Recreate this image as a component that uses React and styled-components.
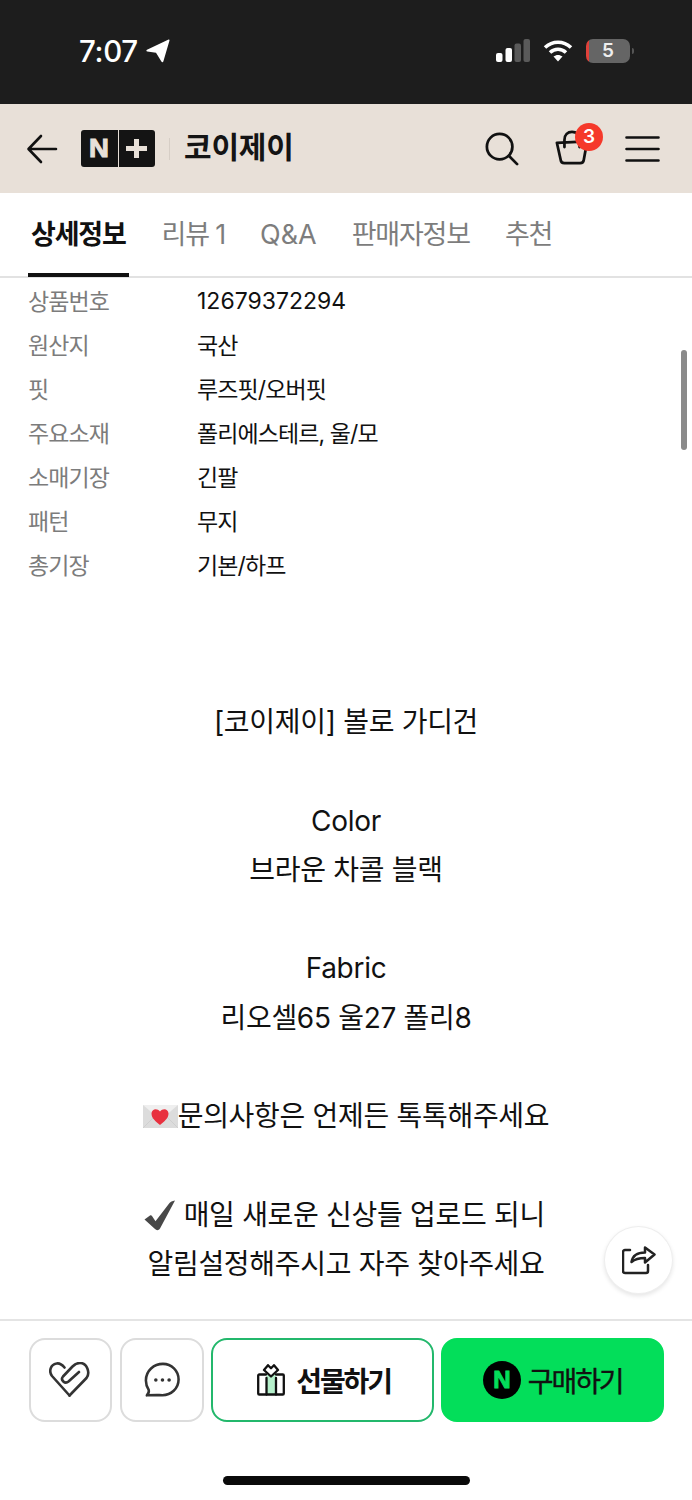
import React from "react";
import styled, { createGlobalStyle } from "styled-components";

const GlobalStyle = createGlobalStyle`
  html, body {
    margin: 0;
    padding: 0;
    background: #fff;
  }
  body {
    font-family: "Inter", "Noto Sans CJK KR", sans-serif;
    color: #111;
  }
  * {
    box-sizing: border-box;
  }
`;

const Page = styled.div`
  position: relative;
  width: 692px;
  height: 1500px;
  overflow: hidden;
  display: flex;
  flex-direction: column;
`;

const StatusBar = styled.div`
  height: 104px;
  background: #1d1d1d;
  display: flex;
  align-items: flex-start;
  justify-content: space-between;
  padding: 36px 62px 0 79px;
`;

const Clock = styled.div`
  display: flex;
  align-items: center;
  gap: 8px;
  color: #fff;
  font-size: 29.5px;
  line-height: 30px;
  font-weight: 500;
  letter-spacing: -0.3px;
`;

const StatusIcons = styled.div`
  display: flex;
  align-items: center;
  gap: 13px;
  height: 30px;
`;

const Battery = styled.div`
  position: relative;
  width: 44px;
  height: 24px;
  border-radius: 7px;
  background: linear-gradient(90deg, #e0413a 0 3px, #656565 3px);
  color: #eee;
  font-size: 19px;
  font-weight: 600;
  line-height: 24px;
  text-align: center;

  &::after {
    content: "";
    position: absolute;
    right: -4px;
    top: 9px;
    width: 2px;
    height: 6px;
    border-radius: 0 2px 2px 0;
    background: #555;
  }
`;

const Header = styled.header`
  height: 89px;
  background: #e8e0d8;
  display: flex;
  align-items: center;
  padding: 0 32px 0 26px;
`;

const BrandBadge = styled.div`
  display: flex;
  width: 74px;
  height: 37px;
  margin-left: 23px;
  border-radius: 3px;
  background: #141414;
  color: #e8e0d8;
`;

const BadgeCell = styled.div`
  flex: 1;
  display: flex;
  align-items: center;
  justify-content: center;
  font-family: "Liberation Sans", sans-serif;
  font-size: 25px;
  font-weight: 700;
  line-height: 1;
  -webkit-text-stroke: 1px #e8e0d8;

  & + & {
    border-left: 1px solid #e8e0d8;
  }
`;

const BadgeLetter = styled.span`
  display: block;
  transform: scaleX(1.1);
`;

const HeaderDivider = styled.div`
  width: 1px;
  height: 22px;
  margin: 0 14px;
  background: #d6cec6;
`;

const StoreName = styled.h1`
  flex: 1;
  margin: 0 0 3px;
  font-size: 30px;
  line-height: 40px;
  font-weight: 700;
  letter-spacing: -0.2px;
  color: #141414;
`;

const HeaderActions = styled.div`
  display: flex;
  align-items: center;
  gap: 36px;
`;

const CartButton = styled.div`
  position: relative;
  width: 34px;
  height: 38px;
`;

const CartCount = styled.span`
  position: absolute;
  top: -7px;
  right: -14px;
  width: 28px;
  height: 28px;
  border-radius: 50%;
  background: #f5392b;
  color: #fff;
  font-size: 19px;
  font-weight: 600;
  line-height: 28px;
  text-align: center;
`;

const TabBar = styled.nav`
  height: 85px;
  display: flex;
  padding-left: 28px;
  gap: 35px;
  border-bottom: 2px solid #e2e2e2;
`;

const Tab = styled.div`
  height: 84px;
  padding: 0 ${(p) => (p.$active ? "3px" : "0")};
  margin-right: ${(p) => (p.$active ? "-2px" : "0")};
  font-size: 27px;
  line-height: 84px;
  letter-spacing: ${(p) => (p.$latin ? "0" : "-1.2px")};
  font-weight: ${(p) => (p.$active ? 700 : 400)};
  color: ${(p) => (p.$active ? "#111" : "#7d7d7d")};
  border-bottom: ${(p) => (p.$active ? "4px solid #111" : "none")};
`;

const Content = styled.main`
  position: relative;
  height: 1041px;
  overflow: hidden;
`;

const SpecTable = styled.dl`
  margin: 0;
  padding: 0 28px;
`;

const SpecRow = styled.div`
  display: grid;
  grid-template-columns: 169px 1fr;
  height: 44px;
  align-items: center;
`;

const SpecLabel = styled.dt`
  font-size: 23px;
  letter-spacing: -0.9px;
  color: #7c7c7c;
`;

const SpecValue = styled.dd`
  margin: 0;
  padding-top: ${(p) => (p.$numeric ? "2px" : "0")};
  font-size: 23px;
  letter-spacing: ${(p) => (p.$numeric ? "0" : "-0.9px")};
  color: #111;
`;

const Description = styled.section`
  margin-top: 112px;
  text-align: center;
  font-size: 28px;
  line-height: 49.3px;
  color: #111;
`;

const DescLine = styled.div`
  display: flex;
  align-items: center;
  justify-content: center;
  height: 49.3px;
  padding-right: ${(p) => (p.$nudge ? "3px" : "0")};
  letter-spacing: -0.3px;
`;

const Scrollbar = styled.div`
  position: absolute;
  top: 72px;
  right: 5px;
  width: 6px;
  height: 100px;
  border-radius: 3px;
  background: #8a8a8a;
`;

const ShareButton = styled.div`
  position: absolute;
  right: 19px;
  top: 948px;
  width: 69px;
  height: 68px;
  border-radius: 50%;
  background: #fff;
  border: 1px solid #eee;
  box-shadow: 0 2px 4px rgba(0, 0, 0, 0.1);
  display: flex;
  align-items: center;
  justify-content: center;
`;

const ActionBar = styled.footer`
  height: 181px;
  border-top: 2px solid #e4e4e4;
  display: flex;
  flex-direction: column;
  align-items: center;
`;

const ActionRow = styled.div`
  width: 100%;
  display: flex;
  gap: 7.5px;
  padding: 17px 28px 0 28.5px;
`;

const IconButton = styled.button`
  width: 84px;
  height: 84px;
  padding: 0;
  border: 2px solid #dcdcdc;
  border-radius: 16px;
  background: #fff;
  display: flex;
  align-items: center;
  justify-content: center;
`;

const CtaButton = styled.button`
  width: 223px;
  height: 84px;
  padding: 0 0 0 ${(p) => (p.$filled ? "0" : "3px")};
  border: 2px solid ${(p) => (p.$filled ? "#03de5a" : "#23b86c")};
  border-radius: 16px;
  background: ${(p) => (p.$filled ? "#03de5a" : "#fff")};
  color: #111;
  font-family: inherit;
  font-size: 28px;
  font-weight: ${(p) => (p.$filled ? 400 : 700)};
  letter-spacing: -2.1px;
  -webkit-text-stroke: ${(p) => (p.$filled ? "0.4px #111" : "0")};
  display: flex;
  align-items: center;
  justify-content: center;
  gap: ${(p) => (p.$filled ? "7px" : "11px")};
`;

const NaverMark = styled.span`
  width: 38px;
  height: 38px;
  border-radius: 50%;
  background: #000;
  color: #03de5a;
  font-family: "Liberation Sans", sans-serif;
  font-size: 24px;
  font-weight: 700;
  line-height: 38px;
  text-align: center;
  letter-spacing: 0;
  -webkit-text-stroke: 1px #03de5a;
`;

const HomeIndicator = styled.div`
  width: 247px;
  height: 9px;
  margin-top: 54px;
  border-radius: 5px;
  background: #0a0a0a;
`;

const specs = [
  ["상품번호", "12679372294"],
  ["원산지", "국산"],
  ["핏", "루즈핏/오버핏"],
  ["주요소재", "폴리에스테르, 울/모"],
  ["소매기장", "긴팔"],
  ["패턴", "무지"],
  ["총기장", "기본/하프"],
];

const tabs = ["상세정보", "리뷰 1", "Q&A", "판매자정보", "추천"];

const LocationIcon = () => (
  <svg width="24" height="24" viewBox="0 0 24 24">
    <path d="M22.6.6 1 10.7c-1 .5-.8 1.7.3 1.9l8.7 1.1 5.4 8.9c.6.9 1.8.7 2-.4L23.5 1.5c.1-.7-.3-1.100-.9-.9Z" fill="#fff" />
  </svg>
);

const SignalIcon = () => (
  <svg width="34" height="24" viewBox="0 0 34 24">
    <rect x="0" y="14" width="6.5" height="9" rx="2" fill="#fff" />
    <rect x="9.5" y="9" width="6.5" height="14" rx="2" fill="#fff" />
    <rect x="18.5" y="4.5" width="6.5" height="18.5" rx="2" fill="#5a5a5a" />
    <rect x="27.5" y="0" width="6.5" height="23" rx="2" fill="#5a5a5a" />
  </svg>
);

const WifiIcon = () => (
  <svg width="30" height="24" viewBox="0 0 30 24" fill="none" stroke="#fff" strokeWidth="3.6">
    <path d="M2 8.5C9.5 1.500 20.5 1.500 28 8.5" />
    <path d="M7 13.5c4.700-4.300 11.300-4.300 16 0" />
    <path d="M15 22.5l-4.500-5c2.700-2.100 6.300-2.100 9 0Z" fill="#fff" stroke="none" />
  </svg>
);

const BackIcon = () => (
  <svg width="32" height="32" viewBox="0 0 32 32" fill="none" stroke="#111" strokeWidth="2.6" strokeLinecap="round" strokeLinejoin="round">
    <path d="M30 16H3M15 3 2.5 16 15 29" />
  </svg>
);

const SearchIcon = () => (
  <svg width="34" height="34" viewBox="0 0 36 36" fill="none" stroke="#111" strokeWidth="2.9" strokeLinecap="round">
    <circle cx="15.5" cy="15.5" r="13.5" />
    <path d="M25.5 25.5 34 34" />
  </svg>
);

const CartIcon = () => (
  <svg width="34" height="36" viewBox="0 0 36 38" fill="none" stroke="#111" strokeWidth="2.9" strokeLinecap="round" strokeLinejoin="round">
    <path d="M2 13.5 34 12l-3.500 19.500a4 4 0 0 1-4 3.500H10a4 4 0 0 1-4-3.500Z" />
    <path d="M10 18V10.5C10 5 13.5 2 18 2s8 3 8 8.500V18" />
  </svg>
);

const MenuIcon = () => (
  <svg width="35" height="28" viewBox="0 0 35 28" fill="none" stroke="#111" strokeWidth="2.6" strokeLinecap="round">
    <path d="M1.5 2.5h32M1.500 14h32M1.500 25.500h32" />
  </svg>
);

const EnvelopeIcon = () => (
  <svg width="35" height="24" viewBox="0 0 35 24">
    <rect width="35" height="23" fill="#dcdcdc" />
    <path d="M0 0 17.5 15 35 0Z" fill="#efefef" />
    <path d="M0 23 13 10M35 23 22 10" stroke="#cfcfcf" strokeWidth="1" />
    <path d="M17 20C13 16.500 8.500 13.500 8.500 8.500 8.500 4 14 2.500 17 6.500c3-4 8.500-2.500 8.500 2 0 5-4.500 8-8.500 11.500Z" fill="#e8313f" />
  </svg>
);

const CheckIcon = () => (
  <svg width="32" height="32" viewBox="0 0 32 32">
    <path d="M.5 19.5 6 15.500c.8-.5 1.500-.3 2 .4l3.500 5.400L25.500 3c1-1.300 2.500-2 5.500-2.500L16 28.500c-1.200 2-3.500 2.300-5 .6Z" fill="#484848" />
  </svg>
);

const ShareIcon = () => (
  <svg width="34" height="30" viewBox="0 0 34 30" fill="none" stroke="#222" strokeWidth="2.5" strokeLinecap="round" strokeLinejoin="round">
    <path d="M8 5H3a2 2 0 0 0-2 2v19a2 2 0 0 0 2 2h21a2 2 0 0 0 2-2v-6" />
    <path d="M9.5 17C10.500 11 15 7.500 23 7.500V2.500L32.500 9.500 23 17.500V13C17 13 13 14 9.500 17Z" />
  </svg>
);

const HeartLinkIcon = () => (
  <svg width="42" height="36" viewBox="0 0 42 36" fill="none" stroke="#333" strokeWidth="2.6" strokeLinecap="round" strokeLinejoin="round">
    <path d="M15.5 5.5C13 2.500 10 1 7.500 1.500 1.500 2.500-.5 9.500 3 14L20.500 33.500" />
    <path d="M20.5 33.5 37.500 16C41.500 10.500 38 1 31 1c-3 0-5 1-7.500 3.500L14 14.500c-3 3.500 2 8 5.500 5L30 10" />
  </svg>
);

const ChatIcon = () => (
  <svg width="36" height="36" viewBox="0 0 38 38" fill="none" stroke="#333" strokeWidth="2.7" strokeLinejoin="round">
    <path d="M20 2c9 0 16.500 7 16.500 16.500S28.500 35 19.500 35c-4.500 0-8-.2-16.500.2C5 33 5.500 31.500 5 29.500 3 26.500 2 23 2 19.500 2 9 10.500 2 20 2Z" />
    <circle cx="12.5" cy="19" r="1.9" fill="#333" stroke="none" />
    <circle cx="19.5" cy="19" r="1.9" fill="#333" stroke="none" />
    <circle cx="26.5" cy="19" r="1.9" fill="#333" stroke="none" />
  </svg>
);

const GiftIcon = () => (
  <svg width="28" height="32" viewBox="0 0 28 32" fill="none" stroke="#111" strokeWidth="2.3" strokeLinejoin="round" strokeLinecap="round">
    <rect x="9.5" y="11" width="9.5" height="19.5" fill="#b5f0cb" stroke="none" />
    <path d="M9 10.5H2.300a1.100 1.100 0 0 0-1.100 1.100v17.800c0 .6.500 1.100 1.100 1.100h23.400c.6 0 1.100-.5 1.100-1.100V11.600c0-.6-.5-1.100-1.100-1.100H19" />
    <path d="M9.5 14v16.500M19 14v16.500" />
    <path d="M14 12.5 7 6l4-4.800 3 3 3-3L21 6Z" />
  </svg>
);

const App = () => {
  return (
    <Page>
      <GlobalStyle />
      <StatusBar>
        <Clock>
          7:07
          <LocationIcon />
        </Clock>
        <StatusIcons>
          <SignalIcon />
          <WifiIcon />
          <Battery>5</Battery>
        </StatusIcons>
      </StatusBar>

      <Header>
        <BackIcon />
        <BrandBadge>
          <BadgeCell>
            <BadgeLetter>N</BadgeLetter>
          </BadgeCell>
          <BadgeCell>
            <svg width="21" height="19" viewBox="0 0 21 19">
              <path d="M8 0h5v7h8v5h-8v7H8v-7H0V7h8Z" fill="#e8e0d8" />
            </svg>
          </BadgeCell>
        </BrandBadge>
        <HeaderDivider />
        <StoreName>코이제이</StoreName>
        <HeaderActions>
          <SearchIcon />
          <CartButton>
            <CartIcon />
            <CartCount>3</CartCount>
          </CartButton>
          <MenuIcon />
        </HeaderActions>
      </Header>

      <TabBar>
        {tabs.map((tab, i) => (
          <Tab key={tab} $active={i === 0} $latin={tab === "Q&A"}>
            {tab}
          </Tab>
        ))}
      </TabBar>

      <Content>
        <SpecTable>
          {specs.map(([label, value]) => (
            <SpecRow key={label}>
              <SpecLabel>{label}</SpecLabel>
              <SpecValue $numeric={/^\d+$/.test(value)}>{value}</SpecValue>
            </SpecRow>
          ))}
        </SpecTable>

        <Description>
          <DescLine>[코이제이] 볼로 가디건</DescLine>
          <DescLine />
          <DescLine>Color</DescLine>
          <DescLine>브라운 차콜 블랙</DescLine>
          <DescLine />
          <DescLine>Fabric</DescLine>
          <DescLine>리오셀65 울27 폴리8</DescLine>
          <DescLine />
          <DescLine>
            <EnvelopeIcon />
            문의사항은 언제든 톡톡해주세요
          </DescLine>
          <DescLine />
          <DescLine $nudge>
            <CheckIcon />
            &nbsp;매일 새로운 신상들 업로드 되니
          </DescLine>
          <DescLine>알림설정해주시고 자주 찾아주세요</DescLine>
        </Description>

        <Scrollbar />
        <ShareButton>
          <ShareIcon />
        </ShareButton>
      </Content>

      <ActionBar>
        <ActionRow>
          <IconButton>
            <HeartLinkIcon />
          </IconButton>
          <IconButton>
            <ChatIcon />
          </IconButton>
          <CtaButton>
            <GiftIcon />
            선물하기
          </CtaButton>
          <CtaButton $filled>
            <NaverMark>N</NaverMark>
            구매하기
          </CtaButton>
        </ActionRow>
        <HomeIndicator />
      </ActionBar>
    </Page>
  );
};

export default App;
